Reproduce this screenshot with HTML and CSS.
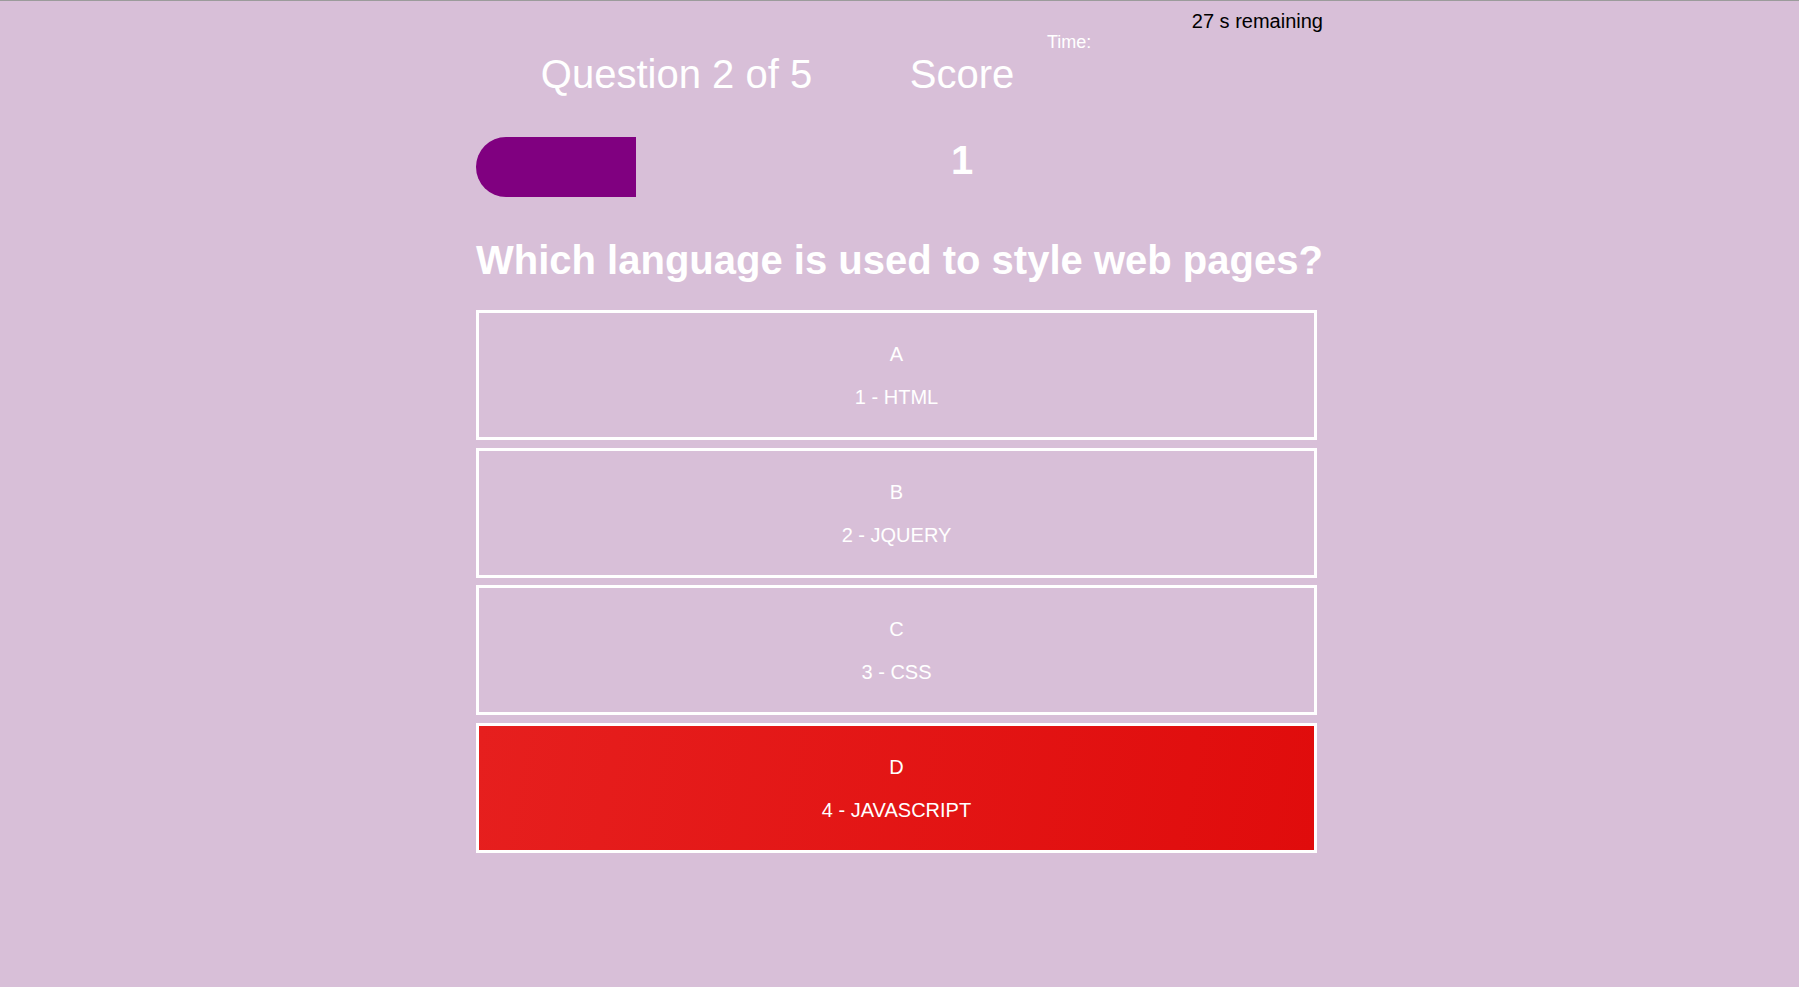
FILE: index.html
```html
<!DOCTYPE html>
<html lang="en">
<head>
<meta charset="utf-8">
<title>Quiz</title>
<link rel="stylesheet" href="styles.css">
</head>
<body>
<main class="game">
  <div class="hud">
    <div class="hud-item progress-item">
      <p class="hud-prefix">Question 2 of 5</p>
      <div class="progress-bar"><div class="progress-fill" style="width:40%"></div></div>
    </div>
    <div class="hud-item score-item">
      <p class="hud-prefix">Score</p>
      <p class="hud-main">1</p>
    </div>
    <div class="hud-item timer-item">
      <p class="timer-remaining">27 s remaining</p>
      <p class="timer-label">Time:</p>
    </div>
  </div>
  <h2 class="question">Which language is used to style web pages?</h2>
  <div class="choices">
    <div class="choice"><p class="choice-letter">A</p><p class="choice-text">1 - HTML</p></div>
    <div class="choice"><p class="choice-letter">B</p><p class="choice-text">2 - JQUERY</p></div>
    <div class="choice"><p class="choice-letter">C</p><p class="choice-text">3 - CSS</p></div>
    <div class="choice choice-incorrect"><p class="choice-letter">D</p><p class="choice-text">4 - JAVASCRIPT</p></div>
  </div>
</main>
</body>
</html>
```
FILE: styles.css
```css
html {
  background: #d8bfd8;
}
body {
  margin: 0;
  min-height: 986px;
  background: #d8bfd8;
  border-top: 1px solid #9b9b9b;
  font-family: "Liberation Sans", Arial, sans-serif;
  color: #ffffff;
}
.game {
  width: 847px;
  margin: 0 auto;
  padding-top: 9px;
}
.hud {
  display: flex;
  align-items: flex-start;
}
.progress-item {
  width: 401px;
}
.score-item {
  width: 170px;
}
.timer-item {
  flex: 1;
}
.hud-prefix {
  margin: 41px 0 0;
  font-size: 40px;
  line-height: 46px;
  text-align: center;
}
.progress-bar {
  margin-top: 40px;
  height: 60px;
}
.progress-fill {
  height: 100%;
  background: #800080;
  border-radius: 30px 0 0 30px;
}
.hud-main {
  margin: 40px 0 0;
  font-size: 40px;
  font-weight: bold;
  line-height: 46px;
  text-align: center;
}
.timer-remaining {
  margin: 0;
  font-size: 20px;
  line-height: 23px;
  color: #000000;
  text-align: right;
}
.timer-label {
  margin: -1px 0 0;
  font-size: 18px;
  line-height: 21px;
}
.question {
  margin: 40px 0 27px;
  font-size: 40px;
  font-weight: bold;
  line-height: 46px;
  white-space: nowrap;
}
.choices {
  display: flex;
  flex-direction: column;
  gap: 7.67px;
}
.choice {
  box-sizing: border-box;
  width: 841px;
  height: 130px;
  padding-top: 2px;
  border: 3px solid #ffffff;
  display: flex;
  flex-direction: column;
  align-items: center;
  justify-content: center;
  gap: 20px;
}
.choice-incorrect {
  background: linear-gradient(100deg, #e61f1e 0%, #e00c0c 100%);
}
.choice-letter,
.choice-text {
  margin: 0;
  font-size: 20px;
  line-height: 23px;
}
```
